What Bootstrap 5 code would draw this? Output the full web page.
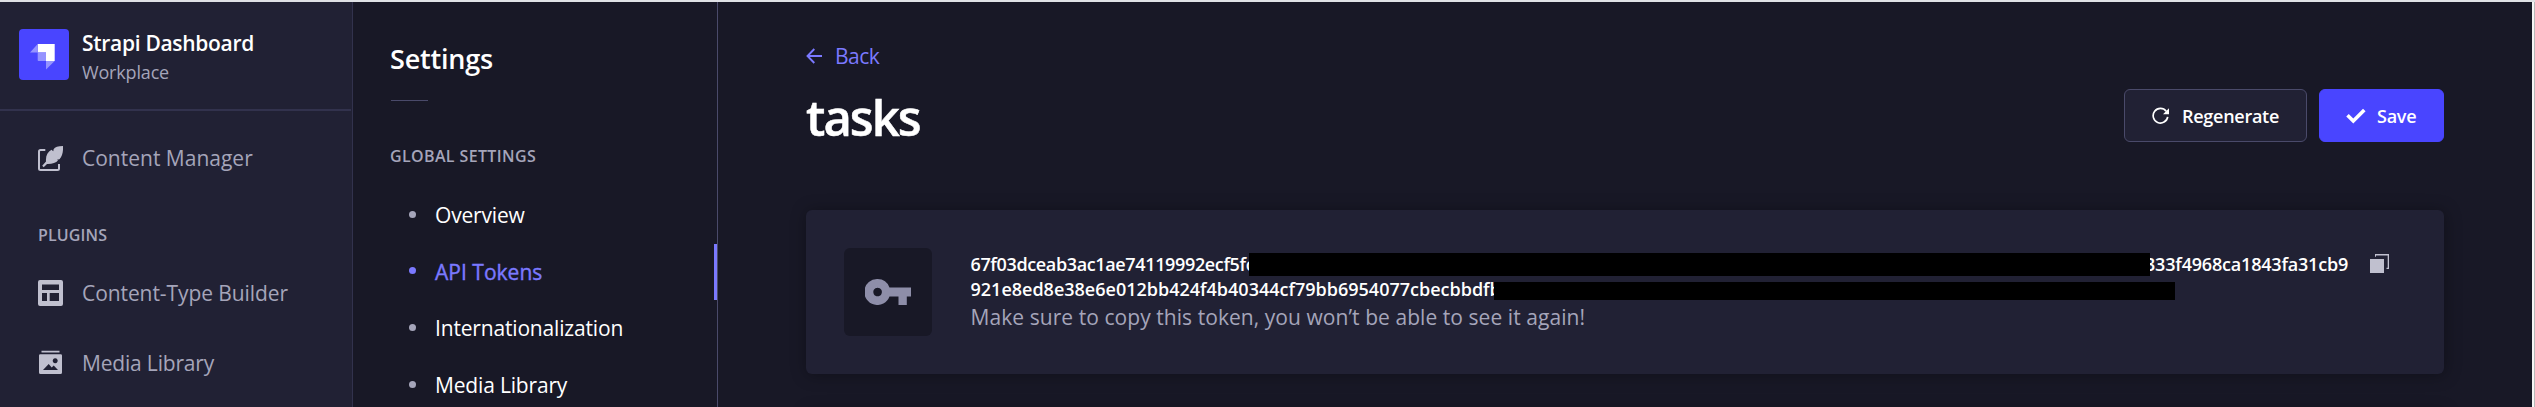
<!DOCTYPE html>
<html lang="en" data-bs-theme="dark">
<head>
<meta charset="utf-8">
<meta name="viewport" content="width=device-width, initial-scale=1">
<title>Strapi Dashboard - API Tokens</title>
<link rel="stylesheet" href="https://cdn.jsdelivr.net/npm/bootstrap@5.3.0/dist/css/bootstrap.min.css">
<style>
body{font-family:"Open Sans","Noto Sans",sans-serif;font-size:21px;line-height:28px;background:#181826;color:#fff;height:407px;overflow:hidden}
a{text-decoration:none;color:inherit}
svg{display:block;flex:none}
.shell{height:407px;border-top:2px solid #dfe1e5;overflow:hidden}
.side{width:353px;background:#212134;border-right:1px solid #32324d;color:#a5a5ba;flex:none}
.brand{height:109px;padding:27px 0 0 19px;gap:13px;border-bottom:2px solid #32324d;margin-right:1px;line-height:29px}
.logo{width:50px;height:51px;border-radius:4px;background:#4945ff}
.brand-name{color:#fff;letter-spacing:-.3px}
.brand-sub{font-size:18px;letter-spacing:-.17px}
.side-link{height:70px;padding-left:38px;gap:19px}
.side-link.first{height:94px}
.side-link svg{color:#c0c0cf}
.label{font-size:16px;font-weight:600;color:#a5a5ba;white-space:nowrap}
.side .label{height:53px;padding:16px 0 0 38px;letter-spacing:.12px}
.sub{width:365px;border-right:1px solid #4a4a6a;flex:none}
.sub h2{font-size:27px;line-height:36px;font-weight:600;letter-spacing:-.19px;margin:0;padding:39px 0 0 37px}
.rule{width:37px;height:1px;background:#4a4a6a;margin:23px 0 0 38px}
.sub .label{padding-left:37px;margin:42px 0 18px;line-height:26px;letter-spacing:.37px}
.sub-link{height:56.6px;padding-left:56px;gap:19px;letter-spacing:-.17px}
.dot{width:7px;height:7px;border-radius:50%;background:#a5a5ba;margin-top:-2px}
.sub-link.active{color:#7b79ff;border-right:3px solid #7b79ff;letter-spacing:.02px;-webkit-text-stroke:.4px}
.sub-link.active .dot{background:#7b79ff}
.content{padding:40px 88px 0;min-width:0}
.back{color:#7b79ff;gap:13px;letter-spacing:-.55px}
.head{height:91px;margin-bottom:49px}
h1{font-size:49px;line-height:60px;font-weight:600;letter-spacing:-2px;margin:0;padding-top:17px;-webkit-text-stroke:.5px}
.acts{gap:12px;padding-top:19px}
.act{height:53px;border-radius:6px;font-size:18px;font-weight:600;line-height:28px;color:#fff;padding:0 0 0 27px;border:1px solid #4a4a6a;background:#212134;letter-spacing:-.27px}
.regen{width:183px;gap:13px}
.save{width:125px;gap:11px;padding-left:26px;background:#4945ff;border-color:#4945ff}
.panel{height:164px;border-radius:6px;background:#212134;box-shadow:1px 1px 16px rgba(3,3,5,.35);padding:38px;margin-bottom:37px}
.keybox{width:88px;height:88px;border-radius:6px;background:#181826;color:#8e8ea9}
.info{margin-left:38.500px;padding-top:4px}
.token{font-size:18px;font-weight:600;line-height:25px;height:25px;white-space:nowrap}
.bar{background:#000;position:relative;flex:none}
.b1{width:901px;height:23px;top:1px}
.b2{width:681px;height:18px;top:5px}
.t1{width:278.500px;flex:none;letter-spacing:-.36px}
.t2{width:523.500px;flex:none}
.tail{letter-spacing:-.19px;margin-left:-5px;width:203px;flex:none}
.copy{margin:2px 0 0 21.500px}
.note{color:#a5a5ba;letter-spacing:.06px;line-height:28px;padding-top:1px}
.edge{width:3px;background:#f5f5f5;border-right:1px solid #b9b9b9;flex:none}
</style>
<script src="https://cdn.jsdelivr.net/npm/bootstrap@5.3.0/dist/js/bootstrap.bundle.min.js"></script>
</head>
<body>
<div class="shell d-flex">
  <nav class="side d-flex flex-column">
    <div class="brand d-flex align-items-start">
      <svg class="logo" viewBox="0 0 50 51"><path fill="#fff" d="M18.7 15h17v17H27v-8.500h-8.300z"/><path fill="#9593ff" d="M18.700 15v8.500H11zM27 32h8.700L27 40.500z"/><path fill="#9593ff" d="M18.700 23.500H27V32h-7.500a.8.8 0 0 1-.8-.8z"/></svg>
      <div><div class="brand-name fw-semibold">Strapi Dashboard</div><div class="brand-sub">Workplace</div></div>
    </div>
    <a href="#" class="side-link first d-flex align-items-center">
      <svg width="25" height="25" viewBox="0 0 25 25"><path d="M7.300 4H2.500Q1 4 1 5.500v17Q1 24 2.500 24h17q1.500 0 1.500-1.500V18" fill="none" stroke="currentColor" stroke-width="2"/><path fill="currentColor" d="M25 0C20 0 17 .8 15.600 3.200L15.300 5.300 13.500 3.800C9.500 6 7.500 10 8 15.600L4.200 19.800l1.500 1.500L9 18c5 .2 9-1.200 11-3.400l-1-.8 2.500-.6C24.500 9.800 25.300 5 25 0z"/></svg>
      <span>Content Manager</span>
    </a>
    <div class="label">PLUGINS</div>
    <a href="#" class="side-link d-flex align-items-center">
      <svg width="25" height="26" viewBox="0 0 25 26"><path fill="currentColor" fill-rule="evenodd" d="M2 0h21q2 0 2 2v22q0 2-2 2H2q-2 0-2-2V2q0-2 2-2zM4 4.500v5.500h17V4.500zM4 13v8h5v-8zM11.700 13v8H21v-8z"/></svg>
      <span style="letter-spacing:-.08px">Content-Type Builder</span>
    </a>
    <a href="#" class="side-link d-flex align-items-center">
      <svg width="25" height="26" viewBox="0 0 25 26"><path fill="currentColor" fill-rule="evenodd" d="M3.500.8h18v1.800h-18zM2.300 4.200h20.400q1.300 0 1.300 1.300v17q0 1.500-1.500 1.500h-20Q1 24 1 22.500v-17q0-1.300 1.300-1.300zM5 20h15l-4.300-4.500-2 2-3-3.500zM17.200 8.300a2.500 2.500 0 1 0 .01 0z"/></svg>
      <span style="letter-spacing:-.18px">Media Library</span>
    </a>
  </nav>

  <aside class="sub">
    <h2>Settings</h2>
    <div class="rule"></div>
    <div class="label">GLOBAL SETTINGS</div>
    <a href="#" class="sub-link d-flex align-items-center"><i class="dot"></i>Overview</a>
    <a href="#" class="sub-link active d-flex align-items-center"><i class="dot"></i>API Tokens</a>
    <a href="#" class="sub-link d-flex align-items-center"><i class="dot"></i>Internationalization</a>
    <a href="#" class="sub-link d-flex align-items-center"><i class="dot"></i>Media Library</a>
  </aside>

  <main class="content flex-grow-1">
    <a href="#" class="back d-inline-flex align-items-center align-top">
      <svg width="16" height="16" viewBox="0 0 16 16" fill="none" stroke="currentColor" stroke-width="1.900"><path d="M16 8H1.500M8.300 1 1.500 8l6.800 7"/></svg>Back
    </a>
    <div class="head d-flex justify-content-between align-items-start">
      <h1>tasks</h1>
      <div class="acts d-flex">
        <button class="act regen d-flex align-items-center">
          <svg width="17" height="17" viewBox="0 0 17 17"><path d="M14.200 4.200A7.300 7.300 0 1 0 15.700 9.800" fill="none" stroke="currentColor" stroke-width="1.700"/><path fill="currentColor" d="M17 1.200v6h-6z"/></svg>Regenerate</button>
        <button class="act save d-flex align-items-center">
          <svg width="20" height="16" viewBox="0 0 20 16"><path d="M1.500 7.300 7.300 13 18.300 2" fill="none" stroke="currentColor" stroke-width="3.600"/></svg>Save</button>
      </div>
    </div>
    <section class="panel d-flex">
      <div class="keybox d-flex align-items-center justify-content-center">
        <svg width="46" height="26" viewBox="0 0 46 26"><path fill="currentColor" fill-rule="evenodd" d="M12.600 0a13 13 0 1 0 11.900 17.500h9V26h8.300v-8.500H46v-9H24.500A13 13 0 0 0 12.600 0zm0 8.700a4.300 4.300 0 1 1-.01 0z"/></svg>
      </div>
      <div class="info">
        <div class="token d-flex">
          <span class="t1">67f03dceab3ac1ae74119992ecf5fc</span><span class="bar b1"></span><span class="tail">333f4968ca1843fa31cb9</span>
          <svg width="19" height="19" viewBox="0 0 19 19" class="copy"><path fill="#c0c0cf" d="M0 5h14v14H0zM5 0h14v15h-2.500v-1.200h1.200V1.500H6v1.200H5z"/></svg>
        </div>
        <div class="token d-flex"><span class="t2">921e8ed8e38e6e012bb424f4b40344cf79bb6954077cbecbbdfb</span><span class="bar b2"></span></div>
        <div class="note">Make sure to copy this token, you won’t be able to see it again!</div>
      </div>
    </section>
    <section class="panel"></section>
  </main>
  <div class="edge"></div>
</div>
</body>
</html>
